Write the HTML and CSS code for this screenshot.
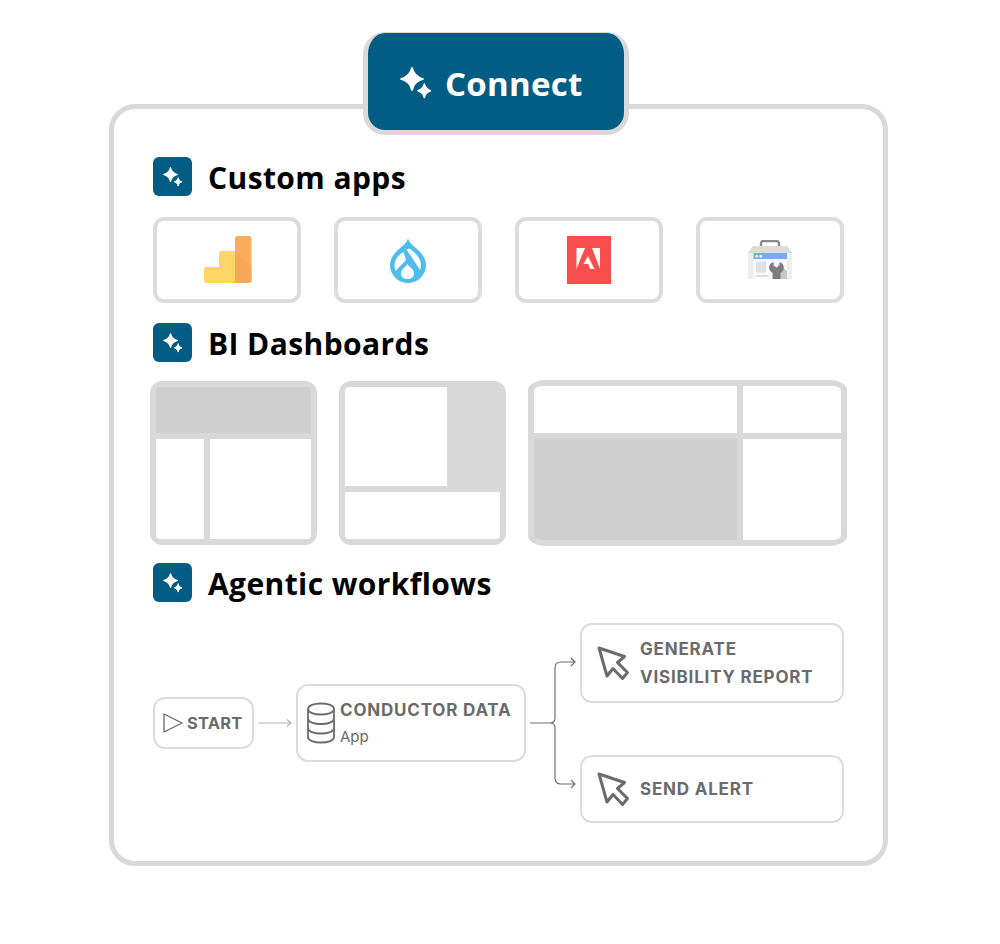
FILE: index.html
```html
<!DOCTYPE html>
<html lang="en">
<head>
<meta charset="utf-8">
<title>Connect</title>
<link rel="stylesheet" href="styles.css">
</head>
<body>
<svg class="defs" width="0" height="0" aria-hidden="true">
  <symbol id="sparkle" viewBox="0 0 32 32">
    <path d="M12 1C13.200 6.200 16 10 23 12C16 14 13.200 17.800 12 23C10.800 17.800 8 14 1 12C8 10 10.800 6.200 12 1Z" fill="#fff" stroke="#fff" stroke-width="1.800" stroke-linejoin="round"/>
    <path d="M24.300 17C25 20.200 26.500 22.400 30.500 23.700C26.500 25 25 27.200 24.300 30.500C23.600 27.200 22 25 18 23.700C22 22.400 23.600 20.200 24.300 17Z" fill="#fff" stroke="#fff" stroke-width="1.500" stroke-linejoin="round"/>
  </symbol>
  <symbol id="cursor" viewBox="0 0 34 36">
    <path d="M3 3L28.500 11.500L21.500 17.500L31.500 27.500L26.500 33.500L17 23.500L11 31Z" fill="none" stroke="#6b6b6b" stroke-width="3" stroke-linejoin="round"/>
  </symbol>
</svg>
<main class="stage">
  <div class="badge">
    <svg class="badge-icon"><use href="#sparkle"/></svg>
    <span class="badge-label">Connect</span>
  </div>
  <section class="frame">
    <h2 class="heading">
      <span class="heading-icon"><svg class="heading-star"><use href="#sparkle"/></svg></span>
      <span class="heading-text">Custom apps</span>
    </h2>
    <div class="apps">
      <div class="app">
        <svg class="app-analytics" width="48" height="48" viewBox="0 0 48 48">
          <path d="M3 31H15V18A3 3 0 0 1 18 15H31V47H3A3 3 0 0 1 0 44V34A3 3 0 0 1 3 31Z" fill="#ffd663"/>
          <path d="M31 3A3 3 0 0 1 34 0H44.500A3 3 0 0 1 47.500 3V44A3 3 0 0 1 44.500 47H31Z" fill="#faac5d"/>
          <path d="M31 15L47.500 32V44A3 3 0 0 1 44.500 47H31Z" fill="#f8a658"/>
        </svg>
      </div>
      <div class="app">
        <svg width="36" height="45" viewBox="0 0 36 45">
          <path d="M18 0C19 5 23 7.500 27 11C32 15.500 36 20.500 36 27C36 37 28 45 18 45C8 45 0 37 0 27C0 20.500 4 15.500 9 11C13 7.500 17 5 18 0Z" fill="#50bcec"/>
          <path d="M16.500 11.500L19.500 10.500C25 14.500 31 20 31 27C31 29 30.800 30.500 30 32Z" fill="#fff"/>
          <path d="M13.500 14L16 22L5.500 33C4.800 31 4.500 29 4.500 27C4.500 21.500 8.500 17 13.500 14Z" fill="#fff"/>
          <path d="M17.500 26C18.500 29 24 30.500 24 35.500C24 39 21 41 17.500 41C14 41 11 39 11 35.500C11 30.500 16.500 29 17.500 26Z" fill="#fff"/>
        </svg>
      </div>
      <div class="app">
        <svg width="44" height="48" viewBox="0 0 44 48">
          <rect width="44" height="48" fill="#fa4d4d"/>
          <path d="M9.500 12H18L9.500 33ZM25 12H33V33ZM21 20L27.500 33H23.300L21.300 28H16.500Z" fill="#fff"/>
        </svg>
      </div>
      <div class="app">
        <svg width="44" height="40" viewBox="0 0 44 40">
          <path d="M13 7V3.500A2.500 2.500 0 0 1 15.500 1H28.500A2.500 2.500 0 0 1 31 3.500V7" fill="none" stroke="#8a8a8a" stroke-width="2.400"/>
          <path d="M5 6H39L44 13V39H0V13Z" fill="#eeeeee"/>
          <path d="M5 6H39L44 13H0Z" fill="#dcdcdc"/>
          <rect x="5.500" y="13" width="33.500" height="6" fill="#7baaf7"/>
          <rect x="7.500" y="15" width="2.400" height="2.400" rx="1.200" fill="#fff"/>
          <rect x="11.500" y="15" width="2.400" height="2.400" rx="1.200" fill="#fff"/>
          <rect x="5.500" y="19" width="33.500" height="20" fill="#fafafa"/>
          <rect x="8" y="21.500" width="10" height="11" fill="#e0e0e0"/>
          <rect x="8" y="35" width="13" height="2" fill="#e0e0e0"/>
          <path d="M30 24L39 31V39H28Z" fill="#c8c8c8"/>
          <path d="M25.500 22V25.500L28.500 27.500L31.500 25.500V22C34.500 23 36.300 26 35.800 28.700C35.300 30.700 34 32 32.500 32.800V39H24.500V32.800C23 32 21.700 30.700 21.200 28.700C20.700 26 22.500 23 25.500 22Z" fill="#7d7d7d"/>
        </svg>
      </div>
    </div>

    <h2 class="heading">
      <span class="heading-icon"><svg class="heading-star"><use href="#sparkle"/></svg></span>
      <span class="heading-text">BI Dashboards</span>
    </h2>
    <div class="boards">
      <div class="board board-a">
        <div class="cell-dark span-2"></div>
        <div class="cell"></div>
        <div class="cell"></div>
      </div>
      <div class="board board-b">
        <div class="cell"></div>
        <div></div>
        <div class="cell span-2"></div>
      </div>
      <div class="board board-c">
        <div class="cell"></div>
        <div class="cell"></div>
        <div class="cell-dark"></div>
        <div class="cell"></div>
      </div>
    </div>

    <h2 class="heading">
      <span class="heading-icon"><svg class="heading-star"><use href="#sparkle"/></svg></span>
      <span class="heading-text">Agentic workflows</span>
    </h2>
    <div class="flow">
      <div class="node node-start">
        <svg class="play" width="20" height="22" viewBox="0 0 20 22"><path d="M1 2V20L19 11Z" fill="none" stroke="#6b6b6b" stroke-width="1.300" stroke-linejoin="round"/></svg>
        <span class="node-title start-title">START</span>
      </div>
      <svg class="link-arrow" width="34" height="10" viewBox="0 0 34 10"><path d="M0 5H33M29 1.500L33 5L29 8.500" fill="none" stroke="#b5b5b5" stroke-width="1.200"/></svg>
      <div class="node node-data">
        <svg class="db" width="28" height="42" viewBox="0 0 28 42">
          <path d="M1 7C1 3.500 7 1.500 14 1.500C21 1.500 27 3.500 27 7V35C27 38.500 21 40.500 14 40.500C7 40.500 1 38.500 1 35ZM1 7C1 10.500 7 12.500 14 12.500C21 12.500 27 10.500 27 7M1 16.500C1 20 7 22 14 22C21 22 27 20 27 16.500M1 26C1 29.500 7 31.500 14 31.500C21 31.500 27 29.500 27 26" fill="none" stroke="#6b6b6b" stroke-width="1.800"/>
        </svg>
        <div class="node-text">
          <span class="node-title">CONDUCTOR DATA</span>
          <span class="node-sub">App</span>
        </div>
      </div>
      <svg class="branch" width="47" height="140" viewBox="0 0 47 140">
        <path d="M0 70H20C23 70 25 68 25 65V15C25 11 27 9 31 9H45M41 5L45 9L41 13M20 70C23 70 25 72 25 75V125C25 129 27 131 31 131H45M41 127L45 131L41 135" fill="none" stroke="#6f6f6f" stroke-width="1.200"/>
      </svg>
      <div class="targets">
        <div class="node node-target node-tall">
          <svg class="cursor"><use href="#cursor"/></svg>
          <span class="node-title node-lines">GENERATE<br>VISIBILITY REPORT</span>
        </div>
        <div class="node node-target node-short">
          <svg class="cursor"><use href="#cursor"/></svg>
          <span class="node-title">SEND ALERT</span>
        </div>
      </div>
    </div>
  </section>
</main>
</body>
</html>
```
FILE: styles.css
```css
* { box-sizing: border-box; }
html, body { margin: 0; background: #fff; }
body { width: 1000px; height: 944px; overflow: hidden; }
.defs { position: absolute; }
.stage { width: 997px; display: flex; flex-direction: column; align-items: center; padding-top: 32px; }
.badge {
  position: relative; z-index: 1;
  width: 266px; height: 103px;
  margin-right: 5px;
  padding: 2px 0 0 32px;
  display: flex; align-items: center; gap: 13px;
  background: #025d85;
  border: 5px solid #d9d9d9; border-top-width: 1px;
  border-radius: 22px;
  color: #fff;
}
.badge-icon { width: 32px; height: 32px; flex: none; }
.badge-label { padding-top: 2px; font: 700 33px/1 "Open Sans", sans-serif; letter-spacing: .3px; }
.frame {
  flex: none;
  width: 779px; height: 762px;
  margin-top: -31px;
  padding: 48px 39px 38px;
  border: 5px solid #d9d9d9; border-radius: 26px;
  background: #fff;
  display: flex; flex-direction: column;
}
.heading {
  margin: 0; height: 39px; flex: none;
  display: flex; align-items: center; gap: 16px;
  font: 700 30px/39px "Open Sans", sans-serif; letter-spacing: .4px; color: #000;
}
.heading-text { padding-top: 2px; }
.heading-icon {
  width: 39px; height: 39px; border-radius: 6px; background: #025d85;
  display: flex; align-items: center; justify-content: center;
}
.heading-star { width: 20px; height: 20px; }
.apps {
  display: grid; grid-template-columns: repeat(4, 1fr); gap: 32.500px;
  margin: 21px 0 20px;
}
.app {
  height: 86px; border: 4px solid #dcdcdc; border-radius: 11px;
  display: flex; align-items: center; justify-content: center;
}
.app-analytics { margin-left: 1px; }
.boards {
  display: flex; gap: 22px; align-items: center;
  margin: 18px -3px 17px;
}
.board {
  flex: none;
  display: grid; gap: 6px; padding: 6px; background: #d9d9d9; overflow: hidden;
}
.board-a { width: 167px; height: 164px; border-radius: 12px; grid-template-columns: 48px 1fr; grid-template-rows: 46px 1fr; }
.board-b { width: 167px; height: 164px; border-radius: 12px; grid-template-columns: 102px 1fr; grid-template-rows: 99px 1fr; }
.board-c { width: 319px; height: 166px; border-radius: 18px / 10px; grid-template-columns: 203px 1fr; grid-template-rows: 47px 1fr; }
.span-2 { grid-column: span 2; }
.cell { background: #fff; }
.cell-dark { background: #cfcfcf; }
.board-a > :first-child { border-radius: 4px 4px 0 0; }
.board-a > :nth-child(2) { border-radius: 0 0 0 4px; }
.board-a > :nth-child(3) { border-radius: 0 0 4px 0; }
.board-b > :first-child { border-radius: 4px 0 0 0; }
.board-b > :nth-child(3) { border-radius: 0 0 4px 4px; }
.board-c > :first-child { border-radius: 8px 0 0 0 / 5px 0 0 0; }
.board-c > :nth-child(2) { border-radius: 0 8px 0 0 / 0 5px 0 0; }
.board-c > :nth-child(3) { border-radius: 0 0 0 8px / 0 0 0 5px; }
.board-c > :nth-child(4) { border-radius: 0 0 8px 0 / 0 0 5px 0; }
.flow { display: flex; align-items: center; margin-top: 21px; }
.node {
  flex: none;
  display: flex; align-items: center;
  border: 2px solid #dcdcdc; border-radius: 12px; background: #fff;
  font-family: Inter, sans-serif; color: #6b6b6b;
}
.node-start { width: 101px; height: 52px; padding-left: 8px; gap: 4px; }
.play, .db { flex: none; }
.link-arrow { flex: none; margin: 0 4px; }
.node-data { width: 230px; height: 78px; padding-left: 9px; gap: 5px; }
.node-text { display: flex; flex-direction: column; gap: 8px; }
.node-title { font-size: 17px; font-weight: 700; line-height: 20px; letter-spacing: .8px; white-space: nowrap; }
.start-title { font-size: 16.500px; letter-spacing: .2px; }
.node-sub { font-size: 15px; line-height: 18px; }
.branch { flex: none; margin: 0 3px 0 4px; }
.targets { display: flex; flex-direction: column; gap: 52px; }
.node-target { width: 264px; padding-left: 14px; gap: 10px; }
.node-tall { height: 80px; }
.node-short { height: 68px; }
.cursor { width: 34px; height: 36px; flex: none; }
.node-lines { line-height: 28px; }
```
